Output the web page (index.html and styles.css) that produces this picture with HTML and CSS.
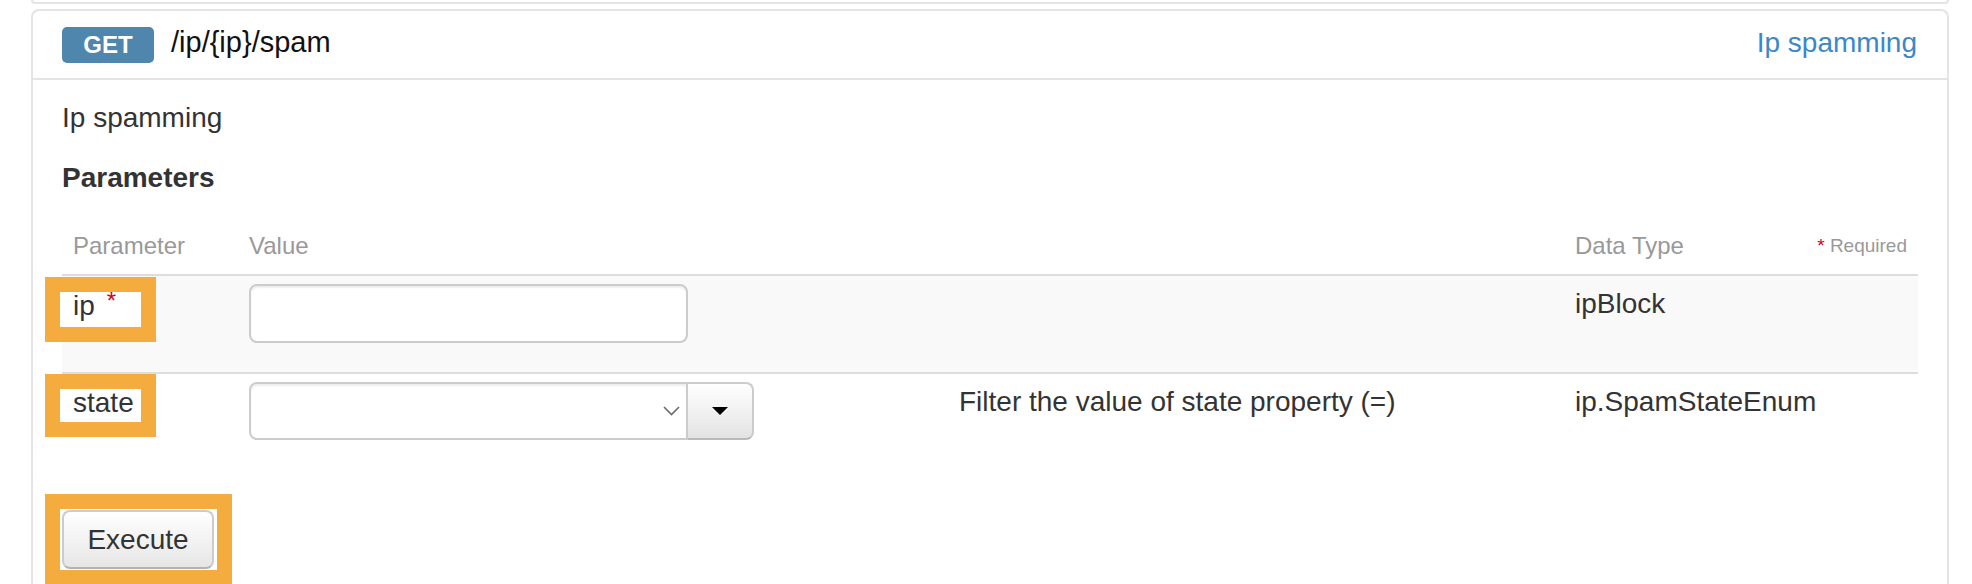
FILE: index.html
```html
<!DOCTYPE html>
<html lang="en">
<head>
  <meta charset="UTF-8" />
  <title>GET /ip/{ip}/spam</title>
  <link rel="stylesheet" href="styles.css">
</head>
<body>

  <!-- end of the operation above -->
  <div class="prev-op"></div>

  <div class="op">
    <div class="op-head">
      <span class="verb">GET</span>
      <span class="path">/ip/{ip}/spam</span>
      <a class="summary">Ip spamming</a>
    </div>

    <div class="op-body">
      <p class="desc">Ip spamming</p>
      <h4>Parameters</h4>

      <table class="params">
        <colgroup>
          <col class="c-name">
          <col class="c-value">
          <col class="c-desc">
          <col class="c-type">
        </colgroup>
        <thead>
          <tr>
            <th>Parameter</th>
            <th>Value</th>
            <th></th>
            <th>Data Type <span class="req-note"><span class="star">*</span> Required</span></th>
          </tr>
        </thead>
        <tbody>
          <tr class="odd">
            <td><span class="mark">ip<span class="req">*</span></span></td>
            <td><input type="text" class="field"></td>
            <td></td>
            <td>ipBlock</td>
          </tr>
          <tr>
            <td><span class="mark short">state</span></td>
            <td>
              <div class="select-group">
                <div class="select-wrap">
                  <select class="field select"><option></option></select>
                  <svg class="chevron" width="17" height="10" viewBox="0 0 17 10">
                    <polyline points="1,1 8.5,8.5 16,1" fill="none" stroke="#6b6b6b" stroke-width="1.6"/>
                  </svg>
                </div>
                <button class="caret-btn" type="button">
                  <svg width="16" height="8" viewBox="0 0 16 8"><polygon points="0,0 16,0 8,8" fill="#000"/></svg>
                </button>
              </div>
            </td>
            <td>Filter the value of state property (=)</td>
            <td>ip.SpamStateEnum</td>
          </tr>
        </tbody>
      </table>

      <div class="mark-btn">
        <button class="execute" type="button">Execute</button>
      </div>
    </div>
  </div>

</body>
</html>
```

FILE: styles.css
```css
body {
  margin: 0;
  font-family: "Liberation Sans", Arial, Helvetica, sans-serif;
  color: #333;
  background: #fff;
  overflow: hidden;
}
.prev-op {
  height: 2px;
  margin: 0 23px 0 31px;
  border: 2px solid #e4e4e4;
  border-top: none;
  border-radius: 0 0 8px 8px;
}
.op {
  margin: 5px 23px 0 31px;
  border: 2px solid #e4e4e4;
  border-radius: 8px;
}
.op-head {
  display: flex;
  align-items: center;
  height: 67px;
  padding: 0 30px 0 29px;
  border-bottom: 2px solid #e4e4e4;
}
.verb {
  width: 92px;
  height: 36px;
  line-height: 36px;
  text-align: center;
  background: #4f86ad;
  color: #fff;
  font-weight: bold;
  font-size: 24px;
  border-radius: 5px;
}
.path {
  margin: 0 0 4px 17px;
  font-size: 29px;
  color: #111;
}
.summary {
  margin: 0 0 4px auto;
  font-size: 28px;
  color: #3a88c8;
}
.op-body {
  padding: 18px 29px 80px;
}
.desc {
  margin: 0;
  font-size: 28px;
  line-height: 40px;
}
.op-body h4 {
  margin: 20px 0 33px;
  font-size: 28px;
  line-height: 40px;
}
.params {
  width: 100%;
  table-layout: fixed;
  border-collapse: separate;
  border-spacing: 0;
}
.c-name { width: 176px; }
.c-value { width: 710px; }
.c-desc { width: 616px; }
.params th {
  text-align: left;
  font-weight: normal;
  color: #999;
  font-size: 24px;
  line-height: 30px;
  padding: 0 11px 13px;
  border-bottom: 2px solid #ddd;
}
.req-note {
  float: right;
  font-size: 19px;
}
.req-note .star {
  color: #d0021b;
}
.params td {
  font-size: 28px;
  line-height: 40px;
  padding: 8px 11px 29px;
  vertical-align: top;
}
.params tr.odd td {
  background: #f9f9f9;
  border-bottom: 2px solid #ddd;
}
.mark {
  display: block;
  width: 81px;
  height: 35px;
  box-sizing: border-box;
  margin: 8px 0 0 -13px;
  padding-left: 13px;
  line-height: 27px;
  background: #fff;
  outline: 15px solid #f3ac3d;
}
.mark.short {
  height: 33px;
  margin-top: 7px;
}
.req {
  margin-left: 12px;
  color: #d0021b;
  font-size: 24px;
  line-height: 0;
  vertical-align: 6px;
}
.field {
  display: block;
  width: 439px;
  height: 59px;
  box-sizing: border-box;
  border: 2px solid #ccc;
  border-radius: 8px;
  background: #fff;
  box-shadow: inset 0 2px 2px rgba(0, 0, 0, 0.07);
}
.select-group {
  display: flex;
}
.select-wrap {
  position: relative;
}
.select {
  height: 58px;
  border-radius: 8px 0 0 8px;
  appearance: none;
  -webkit-appearance: none;
}
.chevron {
  position: absolute;
  right: 8px;
  top: 24px;
}
.caret-btn {
  display: flex;
  align-items: center;
  justify-content: center;
  width: 68px;
  height: 58px;
  margin-left: -2px;
  padding: 0;
  border: 2px solid #ccc;
  border-left-color: #ddd;
  border-bottom-color: #b9b9b9;
  border-radius: 0 8px 8px 0;
  background: linear-gradient(#fff, #e3e3e3);
}
.mark-btn {
  display: flex;
  width: max-content;
  margin: 40px 0 0 -2px;
  padding: 1px 3px 1px 2px;
  background: #fff;
  outline: 15px solid #f3ac3d;
}
.execute {
  width: 152px;
  height: 59px;
  font: 28px "Liberation Sans", Arial, Helvetica, sans-serif;
  color: #333;
  border: 2px solid #ccc;
  border-bottom-color: #b3b3b3;
  border-radius: 8px;
  background: linear-gradient(#fff, #e6e6e6);
}
```
